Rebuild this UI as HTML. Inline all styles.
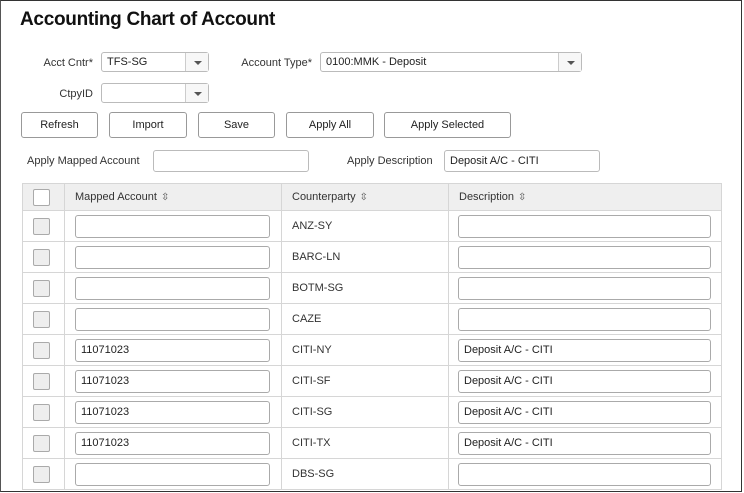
<!DOCTYPE html>
<html><head><style>
*{box-sizing:border-box;margin:0;padding:0}
body{width:744px;height:493px;overflow:hidden;background:#fff;font-family:"Liberation Sans",Arial,sans-serif;font-size:11px;color:#222;position:relative}
.frame{position:absolute;left:0;top:0;width:742px;height:492px;border:1px solid #333;border-left:1px solid #555}
h1{position:absolute;left:20px;top:9px;font-size:19px;font-weight:bold;color:#111;letter-spacing:-0.3px}
.lbl{position:absolute;font-size:11px;color:#333;text-align:right}
.box{position:absolute;border:1px solid #bbb;border-radius:3px;background:#fff;font-size:11px;padding-left:5px;line-height:19px}
.dd{position:absolute;top:0;right:0;bottom:0;width:23px;border-left:1px solid #ccc;background:#f7f7f7}
.dd:after{content:"";position:absolute;left:8px;top:8px;border-left:4px solid transparent;border-right:4px solid transparent;border-top:4px solid #555}
.btn{position:absolute;top:112px;height:26px;border:1px solid #999;border-radius:3px;background:#fff;text-align:center;line-height:24px;font-size:11px;color:#222}
table{position:absolute;left:22px;top:183px;border-collapse:collapse;width:700px}
td,th{border:1px solid #d6d6d6;height:31px;font-weight:normal;text-align:left;font-size:11px;padding:0}
th{background:#efefef;height:27px;color:#333;padding-left:10px}
th.c,td.c{width:42px;padding:0}
.cb{width:17px;height:17px;border:1px solid #aaa;border-radius:2px;background:#eee;margin-left:10px}
th .cb{background:#fff}
.in{height:23px;border:1px solid #aaa;border-radius:3px;background:#fff;padding-left:5px;line-height:21px}
td.m{width:217px;padding-left:10px}
td.m .in{width:195px}
td.p{width:167px;padding-left:10px;color:#333}
td.d{padding-left:9px}
td.d .in{width:253px}
.s{font-size:10px;color:#555;margin-left:4px}
</style></head><body>
<div class="frame"></div>
<h1>Accounting Chart of Account</h1>
<div class="lbl" style="left:20px;top:57px;width:73px">Acct Cntr*</div>
<div class="box" style="left:101px;top:52px;width:108px;height:20px">TFS-SG<div class="dd"></div></div>
<div class="lbl" style="left:230px;top:57px;width:82px">Account Type*</div>
<div class="box" style="left:320px;top:52px;width:262px;height:20px">0100:MMK - Deposit<div class="dd"></div></div>
<div class="lbl" style="left:20px;top:88px;width:73px">CtpyID</div>
<div class="box" style="left:101px;top:83px;width:108px;height:20px"><div class="dd"></div></div>
<div class="btn" style="left:21px;width:77px">Refresh</div>
<div class="btn" style="left:109px;width:78px">Import</div>
<div class="btn" style="left:198px;width:77px">Save</div>
<div class="btn" style="left:286px;width:88px">Apply All</div>
<div class="btn" style="left:384px;width:127px">Apply Selected</div>
<div class="lbl" style="left:27px;top:155px;text-align:left">Apply Mapped Account</div>
<div class="box" style="left:153px;top:150px;width:156px;height:22px"></div>
<div class="lbl" style="left:347px;top:155px;text-align:left">Apply Description</div>
<div class="box" style="left:444px;top:150px;width:156px;height:22px;line-height:20px">Deposit A/C - CITI</div>
<table>
<tr><th class="c"><div class="cb"></div></th><th>Mapped Account<span class="s">⇳</span></th><th>Counterparty<span class="s">⇳</span></th><th>Description<span class="s">⇳</span></th></tr>
<tr><td class="c"><div class="cb"></div></td><td class="m"><div class="in"></div></td><td class="p">ANZ-SY</td><td class="d"><div class="in"></div></td></tr>
<tr><td class="c"><div class="cb"></div></td><td class="m"><div class="in"></div></td><td class="p">BARC-LN</td><td class="d"><div class="in"></div></td></tr>
<tr><td class="c"><div class="cb"></div></td><td class="m"><div class="in"></div></td><td class="p">BOTM-SG</td><td class="d"><div class="in"></div></td></tr>
<tr><td class="c"><div class="cb"></div></td><td class="m"><div class="in"></div></td><td class="p">CAZE</td><td class="d"><div class="in"></div></td></tr>
<tr><td class="c"><div class="cb"></div></td><td class="m"><div class="in">11071023</div></td><td class="p">CITI-NY</td><td class="d"><div class="in">Deposit A/C - CITI</div></td></tr>
<tr><td class="c"><div class="cb"></div></td><td class="m"><div class="in">11071023</div></td><td class="p">CITI-SF</td><td class="d"><div class="in">Deposit A/C - CITI</div></td></tr>
<tr><td class="c"><div class="cb"></div></td><td class="m"><div class="in">11071023</div></td><td class="p">CITI-SG</td><td class="d"><div class="in">Deposit A/C - CITI</div></td></tr>
<tr><td class="c"><div class="cb"></div></td><td class="m"><div class="in">11071023</div></td><td class="p">CITI-TX</td><td class="d"><div class="in">Deposit A/C - CITI</div></td></tr>
<tr><td class="c"><div class="cb"></div></td><td class="m"><div class="in"></div></td><td class="p">DBS-SG</td><td class="d"><div class="in"></div></td></tr>
</table>
</body></html>
